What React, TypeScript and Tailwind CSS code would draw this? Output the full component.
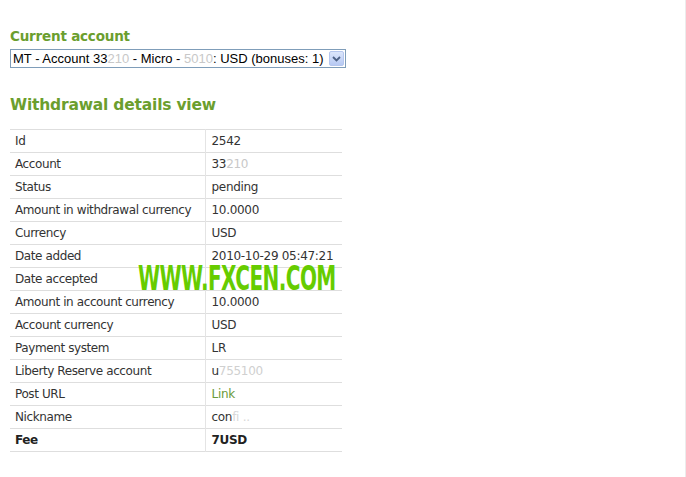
import React from 'react';

const rows: { label: string; value: React.ReactNode; bold?: boolean }[] = [
  { label: 'Id', value: '2542' },
  { label: 'Account', value: <>33<span className="text-[#c8c8c8]">210</span></> },
  { label: 'Status', value: 'pending' },
  { label: 'Amount in withdrawal currency', value: '10.0000' },
  { label: 'Currency', value: 'USD' },
  { label: 'Date added', value: '2010-10-29 05:47:21' },
  { label: 'Date accepted', value: '' },
  { label: 'Amount in account currency', value: '10.0000' },
  { label: 'Account currency', value: 'USD' },
  { label: 'Payment system', value: 'LR' },
  { label: 'Liberty Reserve account', value: <>u<span className="text-[#d0d0d0]">755100</span></> },
  { label: 'Post URL', value: <a className="text-[#6a9a3a]">Link</a> },
  { label: 'Nickname', value: <>con<span className="text-[#d8d8d8]">fi ..</span></> },
  { label: 'Fee', value: '7USD', bold: true },
];

export default function App() {
  return (
    <div className="relative w-[686px] h-[477px] bg-white border-r border-[#ececec] overflow-hidden">
      <div className="pl-[10px] pt-[27px]">
        <h2 className="text-[13.5px] leading-[18px] font-bold text-[#6b9e2e] font-['DejaVu_Sans',sans-serif] tracking-[-0.2px]">
          Current account
        </h2>
        <div className="mt-[4px] flex w-[336px] h-[19px] border border-[#7f9db9] items-center">
          <span className="flex-1 pl-[2px] text-[13px] leading-[17px] text-black font-['Liberation_Sans',Arial,sans-serif] whitespace-nowrap overflow-hidden">
            MT - Account 33<span className="text-[#c8c8c8]">210</span> - Micro - <span className="text-[#c8c8c8]">5010</span>: USD (bonuses: 1)
          </span>
          <span className="w-[15px] h-[15px] mr-[1px] rounded-[2px] bg-gradient-to-b from-[#dce6fb] to-[#b7c9f3] border border-[#b5c6ee] flex items-center justify-center">
            <svg width="9" height="6" viewBox="0 0 9 6">
              <path d="M1 1 L4.5 4.5 L8 1" fill="none" stroke="#4d6185" strokeWidth="1.8" />
            </svg>
          </span>
        </div>
        <h2 className="mt-[27px] text-[15.5px] leading-[20px] font-bold text-[#6b9e2e] font-['DejaVu_Sans',sans-serif] tracking-[-0.2px]">
          Withdrawal details view
        </h2>
        <table className="mt-[14px] w-[332px] border-collapse font-['DejaVu_Sans',Verdana,sans-serif] text-[12px] text-[#333]">
          <tbody>
            {rows.map((r) => (
              <tr key={r.label} className="h-[23px] border-t border-b border-[#dedede]">
                <td className={`w-[195px] pl-[5px] border-r border-[#e4e4e4] tracking-[-0.4px] ${r.bold ? 'font-bold text-[#222]' : ''}`}>
                  {r.label}
                </td>
                <td className={`pl-[6px] tracking-[-0.3px] ${r.bold ? 'font-bold text-[#222]' : ''}`}>{r.value}</td>
              </tr>
            ))}
          </tbody>
        </table>
      </div>
      <div className="absolute left-[138px] top-[261px] origin-left scale-x-[0.59] text-[34px] leading-[34px] font-bold text-[#66cc00] font-['DejaVu_Sans',sans-serif] tracking-[-1px] whitespace-nowrap">
        WWW.FXCEN.COM
      </div>
    </div>
  );
}
